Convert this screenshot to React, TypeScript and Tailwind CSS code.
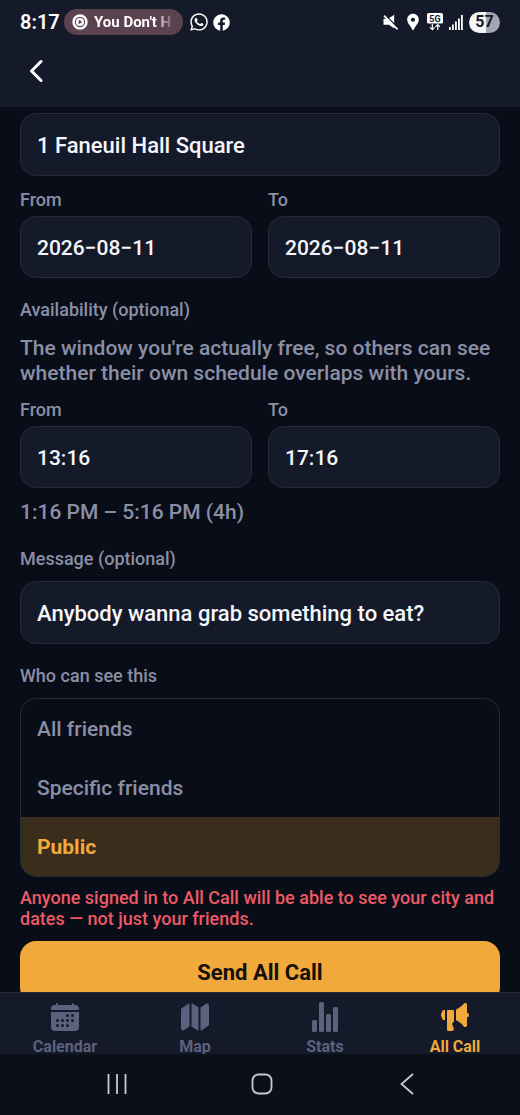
import React, { useState } from 'react'
import { FaFacebook, FaWhatsapp } from 'react-icons/fa'
import { IoCalendar, IoMap, IoMegaphone, IoStatsChart } from 'react-icons/io5'
import { MdLocationPin } from 'react-icons/md'

const StatusBar = () => {
  return (
    <div className="flex h-11 items-center justify-between px-5 text-white">
      <div className="flex items-center">
        <span className="w-11 text-xl leading-6 font-semibold">8:17</span>
        <div className="flex h-[26px] items-center gap-1.5 rounded-full bg-[#5b424f] px-2">
          <svg viewBox="0 0 16 16" className="size-4">
            <circle cx="8" cy="8" r="7.7" fill="#fff" />
            <circle cx="8" cy="8" r="4.6" fill="none" stroke="#5b424f" strokeWidth="1.1" />
            <path d="M6.7 5.7 10.4 8l-3.7 2.3z" fill="#5b424f" />
          </svg>
          <span className="w-[81px] overflow-hidden whitespace-nowrap text-[15px] font-bold [mask-image:linear-gradient(to_right,#000_75%,transparent)]">
            You Don't H
          </span>
        </div>
        <FaWhatsapp className="ml-1.5 size-5" />
        <FaFacebook className="ml-1 size-[17px]" />
      </div>

      <div className="flex items-center">
        <svg viewBox="0 0 16 16" className="size-4" fill="#fff">
          <path d="M0.5 4.8H4l7.2 6.7v3L6 10.8H0.5z" />
          <path d="M5.5 4.6 11.2 0.8v8.6z" />
          <path d="M2 0.600 15.5 14.400" stroke="#151a2a" strokeWidth="1.2" />
          <path d="M1 1.6 14.5 15.4" stroke="#fff" strokeWidth="1.7" />
        </svg>
        <MdLocationPin className="ml-1 size-5" />
        <svg viewBox="0 0 16 18" className="ml-1 h-[18px] w-4">
          <rect x="0" y="0" width="16" height="10.5" rx="1.5" fill="#fff" />
          <text x="8" y="8.5" textAnchor="middle" fontSize="9" fontWeight="700" fill="#151a2a">5G</text>
          <path d="M5.3 11v5.5M3 14.3l2.3 2.3 2.3-2.3M10.7 17v-5.5M8.4 13.8l2.3-2.3 2.3 2.3" fill="none" stroke="#fff" strokeWidth="1.2" />
        </svg>
        <svg viewBox="0 0 14 15" className="ml-1.5 h-[15px] w-3.5" fill="#fff">
          <rect x="0" y="12" width="1.8" height="3" />
          <rect x="3" y="9.5" width="1.8" height="5.5" />
          <rect x="6" y="6.5" width="1.8" height="8.5" />
          <rect x="9" y="3.5" width="1.8" height="11.5" />
          <rect x="12" y="0" width="1.8" height="15" />
        </svg>
        <div className="ml-1.5 flex h-[21px] w-[31px] items-center justify-center rounded-full bg-linear-to-r from-[#f4f5f7] from-55% to-[#a3a6b1] to-55% text-base font-bold text-[#151a2a]">
          57
        </div>
      </div>
    </div>
  )
}

const inputClass =
  'w-full rounded-2xl border border-[#272b3b] bg-[#151a2a] px-4 pt-0.5 leading-7 font-medium text-[#f4f6fb] outline-none'

type FieldProps = { id: string; label: string; value: string }

const SmallField = ({ id, label, value }: FieldProps) => {
  return (
    <div className="flex-1">
      <label htmlFor={id} className="mb-1.5 block text-lg leading-5">{label}</label>
      <input id={id} type="text" defaultValue={value} className={`${inputClass} h-[62px] text-[21px]`} />
    </div>
  )
}

const audiences = ['All friends', 'Specific friends', 'Public']

const tabs = [
  { name: 'Calendar', Icon: IoCalendar },
  { name: 'Map', Icon: IoMap },
  { name: 'Stats', Icon: IoStatsChart },
  { name: 'All Call', Icon: IoMegaphone },
]

const App = () => {
  const [audience, setAudience] = useState('Public')

  return (
    <div className="flex h-screen flex-col bg-[#090d18] font-[Roboto,sans-serif] font-medium text-[#8b8fa6]">
      <header className="shrink-0 bg-[#151a2a] pb-2.5">
        <StatusBar />
        <div className="flex h-[53px] items-center px-5">
          <button type="button" aria-label="Back" className="flex size-8 items-center justify-center">
            <svg viewBox="0 0 14 24" className="h-6 w-3.5">
              <path d="M12 2.5 2.5 12l9.5 9.5" fill="none" stroke="#fff" strokeWidth="3" strokeLinecap="round" strokeLinejoin="round" />
            </svg>
          </button>
        </div>
      </header>

      {/* Form */}
      <main className="min-h-0 flex-1 overflow-y-auto px-5 pt-1.5 [scrollbar-width:none]">
        <form onSubmit={(e) => e.preventDefault()}>
          <input aria-label="Address" type="text" defaultValue="1 Faneuil Hall Square" className={`${inputClass} h-[63px] text-[22px]`} />

          <div className="mt-3.5 flex gap-4">
            <SmallField id="date-from" label="From" value="2026−08−11" />
            <SmallField id="date-to" label="To" value="2026−08−11" />
          </div>

          <h2 className="mt-5.5 text-lg leading-5">Availability (optional)</h2>
          <p className="mt-4 text-[21px] leading-[25px]">
            The window you're actually free, so others can see whether their own schedule overlaps with yours.
          </p>

          <div className="mt-3.5 flex gap-4">
            <SmallField id="time-from" label="From" value="13:16" />
            <SmallField id="time-to" label="To" value="17:16" />
          </div>
          <p className="mt-3 text-[21px] leading-[25px]">1:16 PM – 5:16 PM (4h)</p>

          <label htmlFor="message" className="mt-6 block text-lg leading-5">Message (optional)</label>
          <input id="message" type="text" defaultValue="Anybody wanna grab something to eat?" className={`${inputClass} mt-3 h-[63px] text-[22px]`} />

          <h2 id="audience" className="mt-5.5 text-lg leading-5">Who can see this</h2>
          <div role="radiogroup" aria-labelledby="audience" className="mt-3 overflow-hidden rounded-2xl border border-[#272b3b]">
            {audiences.map((name) => (
              <label
                key={name}
                className={`relative flex h-[59px] items-center px-4 pt-0.5 text-[21px] ${
                  audience === name ? 'bg-[#3a2d1b] font-bold text-[#f2a93b]' : ''
                }`}
              >
                <input type="radio" name="audience" className="sr-only" checked={audience === name} onChange={() => setAudience(name)} />
                {name}
              </label>
            ))}
          </div>

          <p className="mt-2.5 text-lg leading-[21px] text-[#ee5a66]">
            Anyone signed in to All Call will be able to see your city and dates — not just your friends.
          </p>
          <button type="submit" className="mt-3 h-[62px] w-full rounded-2xl bg-[#f2a93b] text-[22px] font-bold text-[#14100a]">
            Send All Call
          </button>
        </form>
      </main>

      {/* Tabs */}
      <nav className="grid h-[62px] shrink-0 grid-cols-4 border-t border-[#272b3b] bg-[#151a2a]">
        {tabs.map(({ name, Icon }) => (
          <a
            key={name}
            href="#"
            className={`flex flex-col items-center pt-2 text-base font-bold ${name === 'All Call' ? 'text-[#f2a93b]' : 'text-[#5c617e]'}`}
          >
            <Icon className="size-8 shrink-0" />
            <span className="leading-7">{name}</span>
          </a>
        ))}
      </nav>

      {/* System navigation */}
      <div className="grid h-[61px] shrink-0 grid-cols-3 items-center justify-items-center bg-[#0b0f18] pr-10 pb-0.5 pl-11">
        <button type="button" aria-label="Recent apps">
          <svg viewBox="0 0 22 22" className="size-[22px]" fill="none" stroke="#c6c9cf" strokeWidth="1.8">
            <path d="M2.5 1v20M11 1v20M19.5 1v20" />
          </svg>
        </button>
        <button type="button" aria-label="Home">
          <svg viewBox="0 0 22 22" className="size-[22px]" fill="none" stroke="#c6c9cf" strokeWidth="1.8">
            <rect x="1.5" y="1.5" width="19" height="19" rx="6" />
          </svg>
        </button>
        <button type="button" aria-label="System back">
          <svg viewBox="0 0 22 22" className="size-[22px]" fill="none" stroke="#c6c9cf" strokeWidth="1.8">
            <path d="M17 1 5.5 11 17 21" />
          </svg>
        </button>
      </div>
    </div>
  )
}

export default App
